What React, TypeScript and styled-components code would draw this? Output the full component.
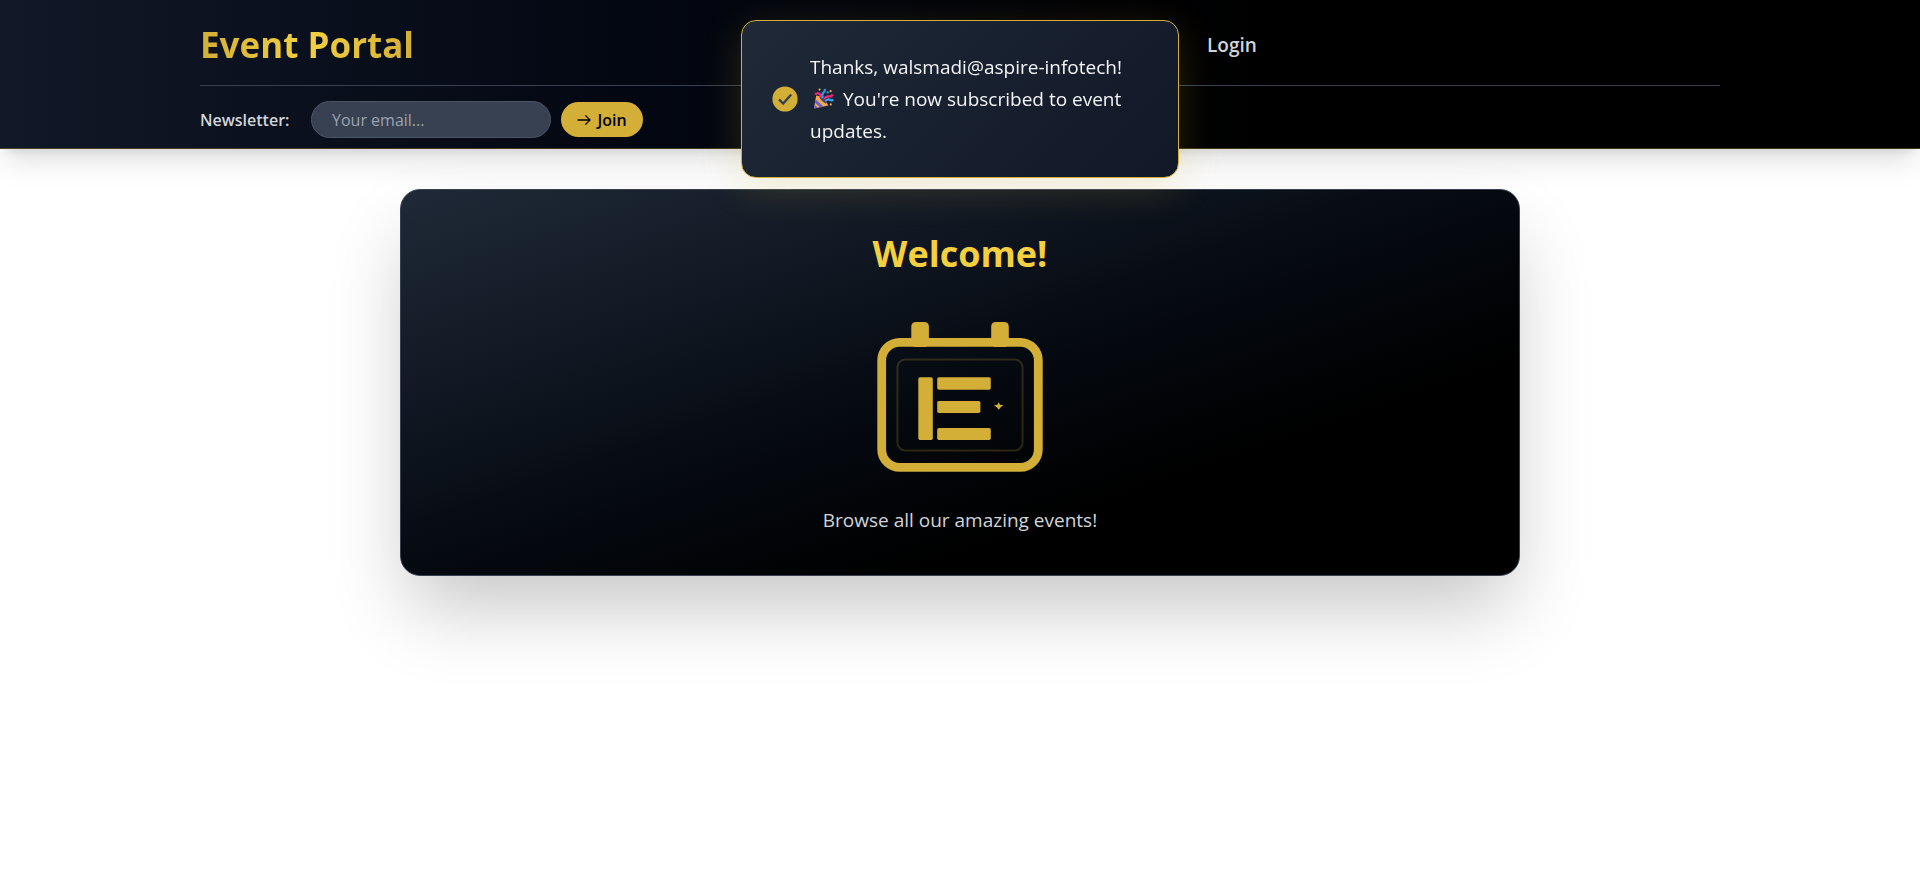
import React from "react";
import styled, { createGlobalStyle } from "styled-components";

const gold = "#d4af37";

const GlobalStyle = createGlobalStyle`
  *, *::before, *::after { box-sizing: border-box; }
  body {
    margin: 0;
    background: #ffffff;
    font-family: "Segoe UI", "Open Sans", "Noto Sans", sans-serif;
  }
`;

const Page = styled.div`
  min-height: 100vh;
`;

const Header = styled.header`
  background: linear-gradient(to right, #111827 0%, #030712 33%, #000000 66%);
  border-bottom: 1px solid rgba(212, 175, 55, 0.3);
  box-shadow: 0 20px 25px -5px rgba(0, 0, 0, 0.1), 0 8px 10px -6px rgba(0, 0, 0, 0.1);
`;

const HeaderInner = styled.div`
  max-width: 1536px;
  margin: 0 auto;
  padding: 0 8px;
`;

const NavBar = styled.div`
  display: grid;
  grid-template-columns: 1fr auto 1fr;
  align-items: center;
  height: 86px;
  padding-top: 4px;
  border-bottom: 1px solid #374151;
`;

const Brand = styled.a`
  justify-self: start;
  font-size: 35px;
  line-height: 48px;
  font-weight: 700;
  text-decoration: none;
  background: linear-gradient(90deg, ${gold}, #f4d03f, ${gold});
  background-clip: text;
  -webkit-background-clip: text;
  color: transparent;
`;

const Nav = styled.nav`
  grid-column: 3;
  padding-left: 247px;
`;

const NavLink = styled.a`
  font-size: 19px;
  line-height: 32px;
  font-weight: 600;
  color: #d1d5db;
  text-decoration: none;
`;

const Newsletter = styled.form`
  display: flex;
  align-items: center;
  padding: 15px 0 10px;
`;

const NewsletterLabel = styled.label`
  width: 111px;
  font-size: 16px;
  line-height: 24px;
  font-weight: 600;
  color: #d1d5db;
`;

const EmailInput = styled.input`
  width: 240px;
  height: 37px;
  padding: 0 20px;
  border: 1px solid #4b5563;
  border-radius: 20px;
  background: #374151;
  color: #ffffff;
  font-family: inherit;
  font-size: 16px;
  &::placeholder { color: #9ca3af; opacity: 1; }
`;

const JoinButton = styled.button`
  display: flex;
  align-items: center;
  justify-content: center;
  gap: 6px;
  height: 35px;
  width: 82px;
  margin-left: 10px;
  padding: 0;
  border: 0;
  border-radius: 20px;
  background: ${gold};
  color: #000000;
  font-family: inherit;
  font-size: 16px;
  font-weight: 600;
`;

const Main = styled.main`
  padding: 40px 16px;
`;

const Card = styled.section`
  display: flex;
  flex-direction: column;
  align-items: center;
  max-width: 1120px;
  margin: 0 auto;
  padding: 40px;
  border: 1px solid #374151;
  border-radius: 20px;
  background: linear-gradient(to bottom right, #1f2937, #111823 28%, #050910 50%, #000000 72%);
  box-shadow: 0 40px 80px -10px rgba(0, 0, 0, 0.23);
`;

const Title = styled.h1`
  margin: 0 0 32px;
  font-size: 36px;
  line-height: 48px;
  font-weight: 700;
  color: #f4d03f;
`;

const Logo = styled.svg`
  display: block;
  width: 180px;
  height: 180px;
`;

const Tagline = styled.p`
  margin: 15px 0 0;
  font-size: 19px;
  line-height: 30px;
  color: #d1d5db;
`;

const Toast = styled.div`
  position: fixed;
  top: 20px;
  left: 50%;
  transform: translateX(-50%);
  z-index: 10;
  display: flex;
  align-items: center;
  gap: 12px;
  width: 438px;
  max-width: 100%;
  padding: 30px;
  border: 1px solid ${gold};
  border-radius: 15px;
  background: linear-gradient(135deg, #1f2937, #111827);
  box-shadow: 0 10px 40px rgba(212, 175, 55, 0.2);
  color: #f3f4f6;
  font-size: 19px;
  line-height: 32px;
`;

const ToastIcon = styled.svg`
  flex: none;
  width: 26px;
  height: 26px;
`;

const ToastText = styled.p`
  margin: 0;
`;

const Popper = styled.svg`
  width: 21px;
  height: 21px;
  margin: 0 9px 0 3px;
  vertical-align: -3px;
`;

function EventLogo() {
  return (
    <Logo viewBox="0 0 180 180" role="img" aria-label="Event calendar">
      <rect x="11.7" y="32.4" width="156.6" height="125" rx="18" fill="none" stroke={gold} strokeWidth="8.8" />
      <rect x="41.3" y="12" width="17.6" height="25" rx="4.5" fill={gold} />
      <rect x="121.2" y="12" width="17.6" height="25" rx="4.5" fill={gold} />
      <rect x="27.4" y="49.6" width="125.2" height="91" rx="8" fill="none" stroke={gold} strokeOpacity="0.2" strokeWidth="2" />
      <rect x="48.3" y="67.3" width="14.5" height="62.7" rx="1.8" fill={gold} />
      <rect x="67.2" y="67.3" width="53.6" height="12.4" rx="1.8" fill={gold} />
      <rect x="67.2" y="91" width="43.2" height="12" rx="1.8" fill={gold} />
      <rect x="67.2" y="118" width="53.6" height="12" rx="1.8" fill={gold} />
      <path d="M128.7 92.2 L130 94.8 L133.4 95.2 L130.9 97 L128.7 99.8 L126.5 97 L124 95.2 L127.4 94.8 Z" fill={gold} />
    </Logo>
  );
}

function PartyPopper() {
  return (
    <Popper viewBox="0 0 21 21" role="img" aria-label="Party popper">
      <path d="M1 20.5 L3.2 7.6 Q10 8 15.4 17.4 Z" fill="#f9a84b" />
      <path d="M2.2 11 L10.6 18.6 L7 19.4 L1.7 14.4 Z M1.4 16.6 L4.6 19.8 L1 20.5 Z" fill="#6b63c9" />
      <path d="M6.2 8.6 Q8 8 11 11 Q14.2 14.4 13.2 15.4 Q11.2 15 8.6 12.4 Q6 9.6 6.2 8.6 Z" fill="#3f4a78" />
      <path d="M7.6 9.4 Q8.4 6.4 5.6 5.4 Q3 4.8 2.4 6.6" fill="none" stroke="#f0287e" strokeWidth="2.2" />
      <path d="M10 10 Q8.4 6.4 10.4 4.6 Q12.4 3 11.6 1" fill="none" stroke="#2c9be8" strokeWidth="2.2" />
      <path d="M11.2 11 Q13 8 16.4 8.4 Q19 8.6 19.6 6.4" fill="none" stroke="#f0287e" strokeWidth="2.2" />
      <path d="M12.4 13 Q15 10.6 17 11.8 Q18.6 12.8 20.4 11.8" fill="none" stroke="#3aa5ee" strokeWidth="2.2" />
      <circle cx="6.6" cy="1.6" r="1.1" fill="#f9a84b" />
      <circle cx="17.6" cy="3.2" r="1.1" fill="#f9a84b" />
      <circle cx="17.8" cy="16.4" r="1.1" fill="#f9a84b" />
      <circle cx="14.6" cy="4.4" r="1.1" fill="#3aa5ee" />
    </Popper>
  );
}

export default function App() {
  return (
    <Page>
      <GlobalStyle />
      <Header>
        <HeaderInner>
          <NavBar>
            <Brand href="#">Event Portal</Brand>
            <Nav>
              <NavLink href="#login">Login</NavLink>
            </Nav>
          </NavBar>
          <Newsletter onSubmit={(e) => e.preventDefault()}>
            <NewsletterLabel htmlFor="email">Newsletter:</NewsletterLabel>
            <EmailInput id="email" type="email" placeholder="Your email..." />
            <JoinButton type="submit">
              <svg width="14" height="12" viewBox="0 0 14 12" fill="none" stroke="#000000" strokeWidth="1.3" strokeLinecap="round" strokeLinejoin="round" aria-hidden="true">
                <path d="M1 6 H13 M8.6 1.6 L13 6 L8.6 10.4" />
              </svg>
              Join
            </JoinButton>
          </Newsletter>
        </HeaderInner>
      </Header>
      <Main>
        <Card>
          <Title>Welcome!</Title>
          <EventLogo />
          <Tagline>Browse all our amazing events!</Tagline>
        </Card>
      </Main>
      <Toast role="status">
        <ToastIcon viewBox="0 0 26 26" aria-hidden="true">
          <circle cx="13" cy="13" r="12.6" fill={gold} />
          <path d="M7 13.4 L11.2 17.6 L19.2 8.6" fill="none" stroke="#374151" strokeWidth="2.3" />
        </ToastIcon>
        <ToastText>
          Thanks, walsmadi@aspire-infotech! <PartyPopper />
          You're now subscribed to event updates.
        </ToastText>
      </Toast>
    </Page>
  );
}
